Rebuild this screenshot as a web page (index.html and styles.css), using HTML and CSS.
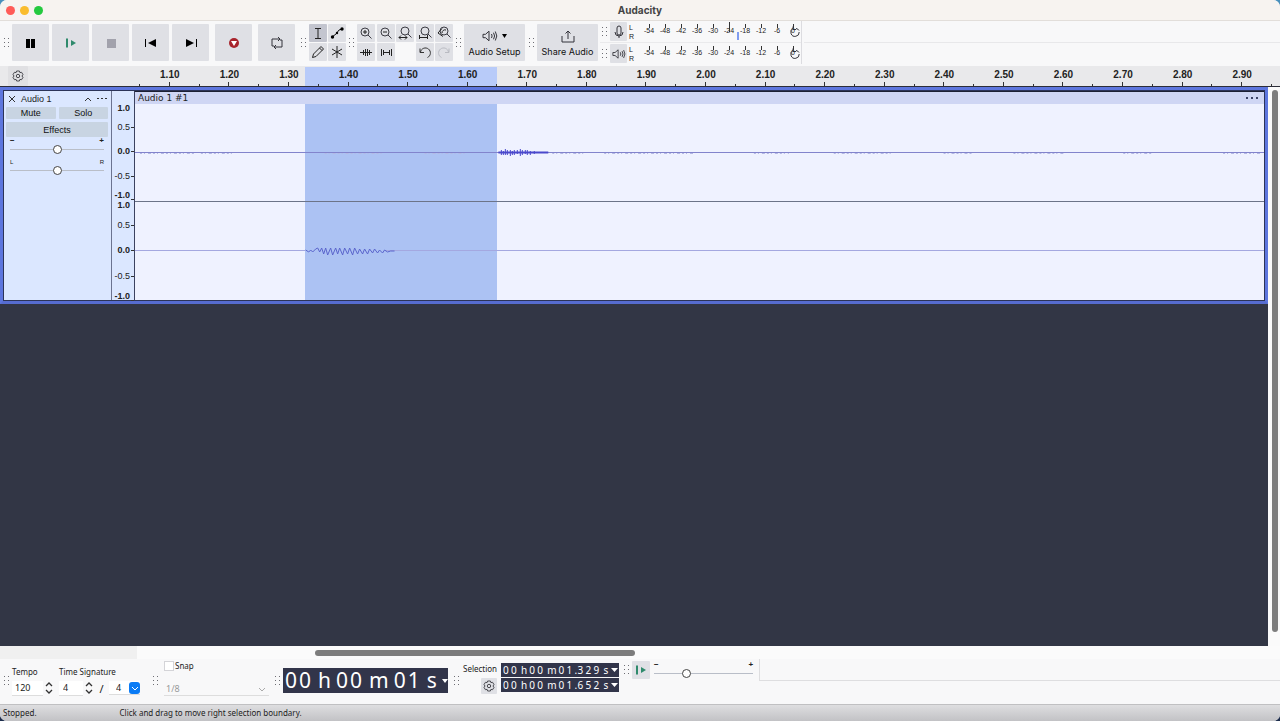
FILE: index.html
```html
<!DOCTYPE html>
<html lang="en">
<head>
  <meta charset="UTF-8">
  <title>Audacity</title>
  <link rel="stylesheet" href="styles.css">
</head>
<body>
<svg class="defs" aria-hidden="true">
  <symbol id="grip3" viewBox="0 0 6 10"><path d="M0 0h1v1H0zM4 0h1v1H4zM0 4h1v1H0zM4 4h1v1H4zM0 8h1v1H0zM4 8h1v1H4z" fill="#6e6e74"/></symbol>
  <symbol id="gear" viewBox="0 0 12 12"><g fill="none" stroke="#4a4a50"><path d="M4.600 1h2.800l.5 1.600 1.700-.3L11 4.700 9.900 6 11 7.300 9.600 9.700l-1.700-.3L7.400 11H4.600l-.5-1.600-1.700.3L1 7.300 2.100 6 1 4.700l1.400-2.400 1.700.3z"/><circle cx="6" cy="6" r="1.700"/></g></symbol>
  <symbol id="lens" viewBox="0 0 18 18"><g fill="none" stroke="#3c3c44"><circle cx="8" cy="8" r="4"/><path d="M11 11l3.500 3.500"/></g></symbol>
  <symbol id="lens-up" viewBox="0 0 18 18"><g fill="none" stroke="#3c3c44"><circle cx="9" cy="7" r="4"/><path d="M12 10l3.500 3.500"/></g></symbol>
  <symbol id="speaker" viewBox="0 0 16 12"><path d="M1 4.300h2.500L7 1.200v9.600L3.500 7.700H1zM9.500 4q1.200 2 0 4M11.500 2.700q2.200 3.300 0 6.600M13.300 1.500q3 4.500 0 9" fill="none" stroke="#33333a"/></symbol>
  <symbol id="reset" viewBox="0 0 12 12"><path d="M4 2.500A4.200 4.200 0 1 0 10.200 6M4 .5v3h3M7 2.500a4 4 0 0 1 3 2" fill="none" stroke="#33333a"/></symbol>
  <symbol id="play" viewBox="0 0 12 12"><path d="M1 1.500h2v9H1z" fill="#2f8a6c"/><path d="M6 3v6l5-3z" fill="#2f8a6c"/></symbol>
  <symbol id="steps" viewBox="0 0 10 14"><path d="M2 5l3-3 3 3M2 9l3 3 3-3" fill="none" stroke="#333" stroke-width="1.300"/></symbol>
</svg>

<div class="window">
  <header class="titlebar">
    <div class="lights"><i class="close"></i><i class="minimize"></i><i class="maximize"></i></div>
    <h1>Audacity</h1>
  </header>

  <div class="toolbars">
    <svg class="grip"><use href="#grip3"/></svg>
    <div class="transport">
      <button aria-label="Pause"><svg width="12" height="12"><path d="M1 2h4v9H1zM6 2h4v9H6z"/></svg></button>
      <button aria-label="Play"><svg width="12" height="12"><use href="#play"/></svg></button>
      <button aria-label="Stop" disabled><svg width="12" height="12"><path d="M2 2h9v9H2z" fill="#a2a2ac"/></svg></button>
      <button aria-label="Skip to start"><svg width="12" height="12"><path d="M0 2h1v8H0zM11 2v8L3 6z"/></svg></button>
      <button aria-label="Skip to end"><svg width="12" height="12"><path d="M11 2h1v8h-1zM1 2v8l8-4z"/></svg></button>
      <button class="apart" aria-label="Record"><svg width="12" height="12"><circle cx="6" cy="6" r="5" fill="#a8242c"/><path d="M3 4h6L6 9z" fill="#fff"/></svg></button>
      <button class="apart" aria-label="Loop"><svg width="14" height="14"><path d="M10 3H2v7h2M5 11h7V4h-2M8 1l2 2-2 2M6 9l-2 2 2 2" fill="none" stroke="#33333a"/></svg></button>
    </div>

    <svg class="grip"><use href="#grip3"/></svg>
    <div class="tools two">
      <button class="active" aria-label="Selection tool"><svg viewBox="0 0 18 18"><path d="M6 4.500h6M6 14.500h6M9 4v10" fill="none" stroke="#222"/></svg></button>
      <button aria-label="Envelope tool"><svg viewBox="0 0 18 18"><path d="M4 13l4-3 3-4 3-1" fill="none" stroke="#111"/><circle cx="4.500" cy="13" r="1.700"/><circle cx="14" cy="5" r="1.700"/><circle cx="9" cy="9" r="1.200"/></svg></button>
      <button aria-label="Draw tool"><svg viewBox="0 0 18 18"><path d="M3.500 14.500l1-3.500 7.500-7.500 2.500 2.500L7 13.500zM10.500 5l2.500 2.500" fill="none" stroke="#222"/></svg></button>
      <button aria-label="Multi-tool"><svg viewBox="0 0 18 18"><path d="M9 3v12M4 6l10 6M4 12l10-6" fill="none" stroke="#222"/></svg></button>
    </div>

    <svg class="grip"><use href="#grip3"/></svg>
    <div class="tools five">
      <button aria-label="Zoom in"><svg viewBox="0 0 18 18"><use href="#lens"/><path d="M6 8h4M8 6v4" stroke="#222"/></svg></button>
      <button aria-label="Zoom out"><svg viewBox="0 0 18 18"><use href="#lens"/><path d="M6 8h4" stroke="#222"/></svg></button>
      <button aria-label="Fit selection"><svg viewBox="0 0 18 18"><use href="#lens-up"/><path d="M3 13.500h8M5 11.500l-2 2 2 2M9 11.500l2 2-2 2" fill="none" stroke="#222"/></svg></button>
      <button aria-label="Fit project"><svg viewBox="0 0 18 18"><use href="#lens-up"/><path d="M3.500 11v4M11.500 11v4M4 13.500h8" fill="none" stroke="#222"/></svg></button>
      <button aria-label="Zoom toggle"><svg viewBox="0 0 18 18"><use href="#lens-up"/><path d="M7 4.500L3 9l5 3.500M7 9a3 3 0 0 1 4-3" fill="none" stroke="#222"/></svg></button>
      <button aria-label="Trim audio"><svg viewBox="0 0 18 18"><path d="M3 9.500h12M6.500 7v5M8.500 6v7M10.500 6v7M12.500 7v5" fill="none" stroke="#222"/></svg></button>
      <button aria-label="Silence audio"><svg viewBox="0 0 18 18"><path d="M4.500 6v7M6.500 7v5M6 9.500h6M12.500 7v5M14.500 6v7" fill="none" stroke="#222"/></svg></button>
      <span></span>
      <button aria-label="Undo"><svg viewBox="0 0 18 18"><path d="M4 5.500v4h4M4.500 9a5 5 0 1 1 7 5.500" fill="none" stroke="#333"/></svg></button>
      <button aria-label="Redo" disabled><svg viewBox="0 0 18 18"><path d="M14 5.500v4h-4M13.500 9a5 5 0 1 0-7 5.500" fill="none" stroke="#b9bbc2"/></svg></button>
    </div>

    <svg class="grip"><use href="#grip3"/></svg>
    <button class="labelled">
      <span class="face"><svg width="16" height="12"><use href="#speaker"/></svg><svg width="6" height="4"><path d="M0 0h5L2.500 4z"/></svg></span>
      Audio Setup
    </button>
    <svg class="grip"><use href="#grip3"/></svg>
    <button class="labelled">
      <span class="face"><svg width="14" height="14"><path d="M1 7v6h12V7M7 10V2M4.500 4.500L7 2l2.500 2.500" fill="none" stroke="#33333a"/></svg></span>
      Share Audio
    </button>

    <div class="meters">
      <div class="meter">
        <svg class="grip"><use href="#grip3"/></svg>
        <button aria-label="Record meter"><svg width="12" height="14"><path d="M4 3a2 2 0 0 1 4 0v5a2 2 0 0 1-4 0zM2 7a4 4 0 0 0 8 0M6 11v2" fill="none" stroke="#33333a"/></svg></button>
        <div class="sides"><span>L</span><span>R</span></div>
        <div class="scale">
          <span>-54</span><span>-48</span><span>-42</span><span>-36</span><span>-30</span><span class="peak">-24</span><span>-18</span><span>-12</span><span>-6</span><span class="zero">0<svg width="12" height="12"><use href="#reset"/></svg></span>
        </div>
      </div>
      <div class="meter">
        <svg class="grip"><use href="#grip3"/></svg>
        <button aria-label="Playback meter"><svg width="14" height="12"><use href="#speaker"/></svg></button>
        <div class="sides"><span>L</span><span>R</span></div>
        <div class="scale">
          <span>-54</span><span>-48</span><span>-42</span><span>-36</span><span>-30</span><span>-24</span><span>-18</span><span>-12</span><span>-6</span><span class="zero">0<svg width="12" height="12"><use href="#reset"/></svg></span>
        </div>
      </div>
    </div>
    <div class="rest"></div>
  </div>

  <div class="timeline">
    <button class="options" aria-label="Timeline options"><svg width="12" height="12"><use href="#gear"/></svg></button>
    <div class="marked"></div>
    <div class="ticks">
      <span>1.10</span><span>1.20</span><span>1.30</span><span>1.40</span><span>1.50</span><span>1.60</span><span>1.70</span><span>1.80</span><span>1.90</span><span>2.00</span><span>2.10</span><span>2.20</span><span>2.30</span><span>2.40</span><span>2.50</span><span>2.60</span><span>2.70</span><span>2.80</span><span>2.90</span>
    </div>
  </div>

  <main class="workspace">
    <div class="tracks">
      <section class="track">
        <div class="panel">
          <div class="name">
            <button aria-label="Close track"><svg width="8" height="8"><path d="M1 1l6 6M7 1L1 7" stroke="#333"/></svg></button>
            <span>Audio 1</span>
            <button aria-label="Collapse"><svg width="8" height="6"><path d="M1 5l3-3 3 3" fill="none" stroke="#333"/></svg></button>
            <button aria-label="Track menu"><svg width="10" height="2"><path d="M0 0h2v1H0zM4 0h2v1H4zM8 0h2v1H8z" fill="#333"/></svg></button>
          </div>
          <div class="pair"><button>Mute</button><button>Solo</button></div>
          <button class="effects">Effects</button>
          <div class="slider">
            <div class="ends"><span>−</span><span>+</span></div>
            <input type="range" aria-label="Gain" value="50">
          </div>
          <div class="slider pan">
            <div class="ends"><span>L</span><span>R</span></div>
            <input type="range" aria-label="Pan" value="50">
          </div>
        </div>
        <div class="levels">
          <div class="level"><b>1.0</b><span>0.5</span><b>0.0</b><span>-0.5</span><b>-1.0</b></div>
          <div class="level"><b>1.0</b><span>0.5</span><b>0.0</b><span>-0.5</span><b>-1.0</b></div>
        </div>
        <div class="clip">
          <div class="clip-name"><span>Audio 1 #1</span><svg width="12" height="2"><path d="M0 0h2v2H0zM5 0h2v2H5zM10 0h2v2h-2z" fill="#3c4468"/></svg></div>
          <div class="waves">
            <div class="selected"></div>
            <svg class="wave" viewBox="0 0 1131 97" preserveAspectRatio="none">
              <path d="M0 48.500H1131" stroke="#8284cc"/>
              <path d="M5 49.500H60M66 49.500H100M190 49.500H250M290 49.500H330M418 49.500H450M470 49.500H560M620 49.500H655M700 49.500H760M810 49.500H840M880 49.500H930M990 49.500H1020M1090 49.500H1128" stroke="#b4b8e4" stroke-dasharray="2 2 1 3 3 2"/>
              <path d="M364 48.500H414" stroke="#4a48cc" stroke-width="2"/>
              <path d="M367 46v5M369 47v4M371 45v6M373 46v5M376 46v6M378 47v4M380 46v5M383 46v4M386 45v7M388 46v5M391 46v4M393 46v5M396 47v4M400 47v3" stroke="#4a48cc"/>
            </svg>
            <svg class="wave" viewBox="0 0 1131 98" preserveAspectRatio="none">
              <path d="M0 48.500H171M250 48.500H1131" stroke="#a4a8e0"/>
              <path d="M171 48l3 2 2-2 2 2 3-3 2-1 2 4 2-4 2 6 2-6 2 7 3-7 2 7 3-7 2 6 2-6 3 7 2-7 3 6 2-6 3 7 2-7 3 6 2-5 3 5 2-5 3 5 2-5 3 4 2-4 3 4 2-3 3 3 2-3 3 2 3-1 4 0" fill="none" stroke="#5a64cc"/>
            </svg>
          </div>
        </div>
      </section>
    </div>
    <div class="vscroll"><div class="thumb"></div></div>
  </main>
  <div class="hscroll"><div class="thumb"></div></div>

  <footer class="bottom">
    <svg class="grip"><use href="#grip3"/></svg>
    <form class="signature">
      <label for="tempo">Tempo</label>
      <label for="upper">Time Signature</label>
      <div class="field tempo"><input id="tempo" value="120"><svg width="10" height="14"><use href="#steps"/></svg></div>
      <div class="field">
        <input id="upper" value="4"><svg width="10" height="14"><use href="#steps"/></svg>
        <span class="slash">/</span>
        <div class="drop blue"><select aria-label="Lower time signature"><option>4</option></select><svg width="11" height="12"><rect width="11" height="12" rx="3" fill="#0a7bf5"/><path d="M3 5l3 3 3-3" fill="none" stroke="#fff"/></svg></div>
      </div>
    </form>

    <svg class="grip"><use href="#grip3"/></svg>
    <form class="snap">
      <label><input type="checkbox">Snap</label>
      <div class="drop"><select aria-label="Snap to" disabled><option>1/8</option></select><svg width="14" height="12"><path d="M4 5l3 3 3-3" fill="none" stroke="#aaa"/></svg></div>
    </form>

    <svg class="grip"><use href="#grip3"/></svg>
    <div class="time big">
      <i>0</i><i>0</i><span>h</span><i>0</i><i>0</i><span>m</span><i>0</i><i>1</i><span>s</span>
      <button aria-label="Time format"><svg width="6" height="4"><path d="M0 0h6L3 4z" fill="#fff"/></svg></button>
    </div>

    <svg class="grip split"><use href="#grip3"/></svg>
    <div class="selection">
      <span>Selection</span>
      <button aria-label="Selection options"><svg width="12" height="12"><use href="#gear"/></svg></button>
    </div>
    <div class="times">
      <div class="time"><i>0</i><i>0</i><span>h</span><i>0</i><i>0</i><span>m</span><i>0</i><i>1</i><i class="dot">.</i><i>3</i><i>2</i><i>9</i><span>s</span><button aria-label="Start format"><svg width="7" height="4"><path d="M0 0h7L3.500 4z" fill="#fff"/></svg></button></div>
      <div class="time"><i>0</i><i>0</i><span>h</span><i>0</i><i>0</i><span>m</span><i>0</i><i>1</i><i class="dot">.</i><i>6</i><i>5</i><i>2</i><span>s</span><button aria-label="End format"><svg width="7" height="4"><path d="M0 0h7L3.500 4z" fill="#fff"/></svg></button></div>
    </div>

    <div class="speed">
      <svg class="grip"><use href="#grip3"/></svg>
      <button aria-label="Play at speed"><svg width="12" height="12"><use href="#play"/></svg></button>
      <div class="slider">
        <div class="ends"><span>−</span><span>+</span></div>
        <input type="range" aria-label="Playback speed" value="31">
      </div>
    </div>
    <div class="rest"></div>
  </footer>

  <div class="status"><span>Stopped.</span><span>Click and drag to move right selection boundary.</span></div>
</div>
</body>
</html>
```

FILE: styles.css
```css
* {
  box-sizing: border-box;
}
body {
  margin: 0;
  background: linear-gradient(#4a90bc, #1c2c4c);
  font-family: "Noto Sans", sans-serif;
  font-size: 8px;
  color: #222;
}
svg {
  display: block;
  flex: none;
}
button {
  display: flex;
  align-items: center;
  justify-content: center;
  border: 0;
  padding: 0;
  background: #dfe0e5;
  border-radius: 1px;
  color: #111;
  font: inherit;
}
input, select {
  margin: 0;
  border: 0;
  padding: 0;
  font: inherit;
  color: inherit;
}
.defs {
  position: absolute;
  width: 0;
  height: 0;
}
.window {
  display: flex;
  flex-direction: column;
  height: 100vh;
  border-radius: 7px;
  overflow: hidden;
  background: #f8f8f9;
}

/* title bar */
.titlebar {
  display: grid;
  grid-template-columns: 1fr auto 1fr;
  align-items: center;
  height: 21px;
  background: #f7f3f0;
  border-bottom: 1px solid #e2deda;
}
.titlebar h1 {
  margin: 0;
  font: bold 10px Inter, sans-serif;
  color: #444;
}
.lights {
  display: flex;
  gap: 5px;
  padding-left: 6px;
}
.lights i {
  width: 9px;
  height: 9px;
  border-radius: 50%;
}
.close { background: #ff5b57; }
.minimize { background: #fabc2d; }
.maximize { background: #24c93f; }

/* top toolbars */
.toolbars {
  display: flex;
  align-items: center;
  height: 45px;
  padding: 0 0 2px 2px;
}
.grip {
  width: 6px;
  height: 10px;
  margin: 0 2px;
}
.transport {
  display: flex;
  gap: 3px;
  margin-right: 4px;
}
.transport button {
  width: 37px;
  height: 37px;
}
.transport .apart {
  margin-left: 3px;
}
.tools {
  display: grid;
  gap: 1px;
  grid-auto-rows: 18px;
  margin-right: 1px;
}
.tools.two {
  grid-template-columns: repeat(2, 18px);
}
.tools.five {
  grid-template-columns: repeat(5, 18px);
  column-gap: 0;
  justify-content: space-between;
  width: 96px;
}
.tools svg {
  width: 18px;
  height: 18px;
}
.tools .active {
  background: #c3c5cf;
}
.labelled {
  flex-direction: column;
  width: 61px;
  height: 37px;
  margin-right: 2px;
  padding-bottom: 3px;
  font: 9px Inter, sans-serif;
}
.face {
  display: flex;
  align-items: center;
  gap: 4px;
  height: 20px;
}
.meters {
  display: flex;
  flex-direction: column;
  align-self: stretch;
  border-right: 1px solid #dcdce0;
}
.meter {
  flex: 1;
  display: flex;
  align-items: center;
  font: 7px "Liberation Sans", sans-serif;
}
.meter + .meter {
  border-top: 1px solid #eaeaec;
}
.meter button {
  width: 17px;
  height: 19px;
}
.sides {
  display: flex;
  flex-direction: column;
  gap: 2px;
  width: 14px;
  padding-left: 2px;
}
.scale {
  display: flex;
}
.scale span {
  position: relative;
  width: 16px;
  padding: 3px 0 6px;
  text-align: center;
}
.scale span::before {
  content: "";
  position: absolute;
  left: 8px;
  top: 0;
  width: 1px;
  height: 4px;
  background: #333;
}
.scale .peak::before {
  height: 10px;
  top: -2px;
}
.scale .peak::after {
  content: "";
  position: absolute;
  left: 16px;
  top: 8px;
  width: 2px;
  height: 8px;
  background: #7f9cf0;
}
.scale .zero svg {
  position: absolute;
  left: 4px;
  top: 2px;
}
.toolbars .rest {
  flex: 1;
  height: 1px;
  margin-left: 2px;
  background: #e8e8ea;
}

/* timeline */
.timeline {
  position: relative;
  display: flex;
  height: 21px;
  background: #e9e9eb;
  border-bottom: 1px solid #2c2d38;
}
.options {
  width: 20px;
  margin-left: 8px;
  background: #e0e0e3;
}
.marked {
  position: absolute;
  left: 305px;
  top: 1px;
  bottom: 0;
  width: 192px;
  background: #b8cbf9;
}
.ticks {
  position: relative;
  display: flex;
  flex: 1;
  margin: 0 8px 0 111px;
  font: bold 10px/18px "Liberation Sans", sans-serif;
  border-right: 1px solid #333;
  border-image: linear-gradient(transparent 85%, #333 85%) 1;
}
.ticks span {
  position: relative;
  flex: 1;
  padding-left: 2px;
  text-align: center;
}
.ticks span::before, .ticks span::after {
  content: "";
  position: absolute;
  bottom: 0;
  left: 0;
  width: 1px;
  height: 2px;
  background: #333;
}
.ticks span::after {
  left: 50%;
  height: 4px;
}

/* tracks */
.workspace {
  flex: 1;
  display: flex;
  min-height: 0;
}
.tracks {
  flex: 1;
  background: #323645;
}
.track {
  display: flex;
  height: 217px;
  border: 3px solid #5d76de;
  border-bottom-color: #566cd0;
  outline: 1px solid #2c3458;
  outline-offset: -4px;
}
.panel {
  width: 108px;
  padding: 3px;
  background: #dbe7ff;
  font: 9px "Liberation Sans", sans-serif;
}
.panel button {
  background: #c8d4e2;
}
.name {
  display: flex;
  align-items: center;
  gap: 5px;
  height: 12px;
  margin-bottom: 2px;
  padding: 0 1px 0 2px;
}
.name span {
  flex: 1;
}
.panel .name button {
  background: none;
}
.pair {
  display: flex;
  gap: 3px;
}
.pair button {
  flex: 1;
  height: 12px;
}
.panel .effects {
  width: 100%;
  height: 15px;
  margin: 3px 0 1px;
}
.slider {
  font: bold 8px/6px "Liberation Sans", sans-serif;
}
.ends {
  display: flex;
  justify-content: space-between;
}
.panel .slider {
  padding: 0 4px;
}
.panel .pan {
  padding-top: 5px;
  font: 6px/6px "Liberation Sans", sans-serif;
}
input[type="range"] {
  display: block;
  width: 100%;
  height: 10px;
  appearance: none;
  background: linear-gradient(#b9bec8, #b9bec8) center / 100% 1px no-repeat;
}
input[type="range"]::-webkit-slider-thumb {
  appearance: none;
  width: 9px;
  height: 9px;
  border: 1px solid #444;
  border-radius: 50%;
  background: #fff;
}
.levels {
  display: grid;
  grid-template-rows: 97fr 101fr;
  width: 23px;
  padding-top: 13px;
  background: #dbe7ff;
  border-left: 1px solid #6b7390;
  font: 9px/10px "Liberation Sans", sans-serif;
}
.level {
  display: grid;
  grid-template-rows: 12px 1fr 1fr 1fr 12px;
  align-items: center;
  text-align: right;
}
.level > * {
  position: relative;
  padding-right: 4px;
}
.level > *::after {
  content: "";
  position: absolute;
  right: 0;
  top: 5px;
  width: 3px;
  height: 1px;
  background: #333;
}
.level > :first-child {
  align-self: start;
}
.level > :last-child {
  align-self: end;
}
.level > :first-child::after {
  display: none;
}
.level > :last-child::after {
  top: 9px;
}
.clip {
  flex: 1;
  display: flex;
  flex-direction: column;
  border: 1px solid #3c4260;
  border-top: 2px solid #1c2034;
}
.clip-name {
  display: flex;
  align-items: center;
  justify-content: space-between;
  height: 12px;
  padding: 0 6px 0 3px;
  background: #cfd6f4;
  font: 9px "DejaVu Sans", sans-serif;
}
.waves {
  position: relative;
  flex: 1;
  display: grid;
  grid-template-rows: 97fr 99fr;
  min-height: 0;
  background: #eff2ff;
}
.selected {
  position: absolute;
  left: 15.1%;
  top: 0;
  bottom: 0;
  width: 17%;
  background: #acc2f3;
}
.wave {
  position: relative;
  width: 100%;
  height: 100%;
  min-height: 0;
}
.wave + .wave {
  border-top: 1px solid #6c7488;
}

/* scroll bars */
.vscroll {
  width: 12px;
  padding: 3px 2px 14px 4px;
  background: #fafafa;
}
.vscroll .thumb {
  height: 100%;
  border-radius: 3px;
  background: #7d7d7d;
}
.hscroll {
  height: 13px;
  padding-top: 4px;
  background: linear-gradient(90deg, #f0f0f0 137px, #fbfbfb 137px);
}
.hscroll .thumb {
  width: 25%;
  height: 6px;
  margin-left: 315px;
  border-radius: 3px;
  background: #7d7d7d;
}

/* bottom toolbars */
.bottom {
  display: flex;
  align-items: center;
  height: 45px;
  padding: 0 0 2px 2px;
}
.signature {
  display: grid;
  grid-template-columns: 47px 81px;
  row-gap: 4px;
  margin: 0 11px 0 0;
}
.field {
  display: flex;
  align-items: center;
  font-size: 9px;
}
.field input {
  width: 24px;
  height: 15px;
  padding-left: 4px;
  background: #fff;
  border-bottom: 1px solid #ddd;
}
.field.tempo input {
  width: 31px;
  padding-left: 3px;
}
.field > svg {
  margin-left: 1px;
}
.slash {
  flex: 1;
  text-align: center;
  font-size: 11px;
}
.drop {
  display: grid;
  align-items: center;
}
.drop > * {
  grid-area: 1 / 1;
}
.drop svg {
  justify-self: end;
  pointer-events: none;
}
.drop select {
  appearance: none;
  width: 100%;
  height: 14px;
  background: #fff;
  border-bottom: 1px solid #ddd;
}
.blue select {
  width: 31px;
  padding-left: 7px;
}
.snap {
  width: 105px;
  margin: 0 4px 5px 3px;
}
.snap label {
  display: flex;
  align-items: center;
  gap: 1px;
  margin-bottom: 11px;
}
.snap input {
  appearance: none;
  width: 10px;
  height: 10px;
  border: 1px solid #d4d4d8;
  background: #fff;
}
.snap .drop select {
  padding-left: 2px;
  background: #f8f8f9;
  color: #999;
  font-size: 9px;
  opacity: 1;
}
.time {
  display: flex;
  align-items: center;
  height: 14px;
  padding-left: 2px;
  background: #32354a;
  color: #fff;
  font-size: 10px;
  line-height: 14px;
}
.time i {
  width: 8px;
  font-style: normal;
}
.time .dot {
  width: 3px;
}
.time span {
  padding: 0 2px;
}
.time button {
  flex: 1;
  background: none;
}
.time.big {
  width: 165px;
  height: 25px;
  margin: 0;
  font-size: 21px;
  line-height: 25px;
}
.big i {
  width: 14px;
}
.big span {
  padding: 0 5px;
}
.split {
  margin-left: 6px;
}
.selection {
  display: flex;
  flex-direction: column;
  align-items: flex-end;
  gap: 4px;
  margin: 0 4px 4px 1px;
}
.selection button {
  width: 16px;
  height: 16px;
}
.times {
  display: flex;
  flex-direction: column;
  gap: 1px;
  width: 118px;
  margin-bottom: 6px;
}
.speed {
  display: flex;
  align-self: flex-start;
  align-items: center;
  padding: 2px 6px 0 3px;
}
.speed button {
  width: 18px;
  height: 18px;
}
.speed .slider {
  width: 99px;
  margin-left: 4px;
}
.bottom .rest {
  flex: 1;
  align-self: flex-start;
  height: 22px;
  border-left: 1px solid #dedee0;
  border-bottom: 1px solid #dedee0;
}

/* status bar */
.status {
  display: flex;
  align-items: center;
  gap: 83px;
  height: 17px;
  padding: 0 0 2px 3px;
  border-top: 1px solid #c0c0c2;
  background: linear-gradient(#dedee0, #c2c2c5);
}
```
